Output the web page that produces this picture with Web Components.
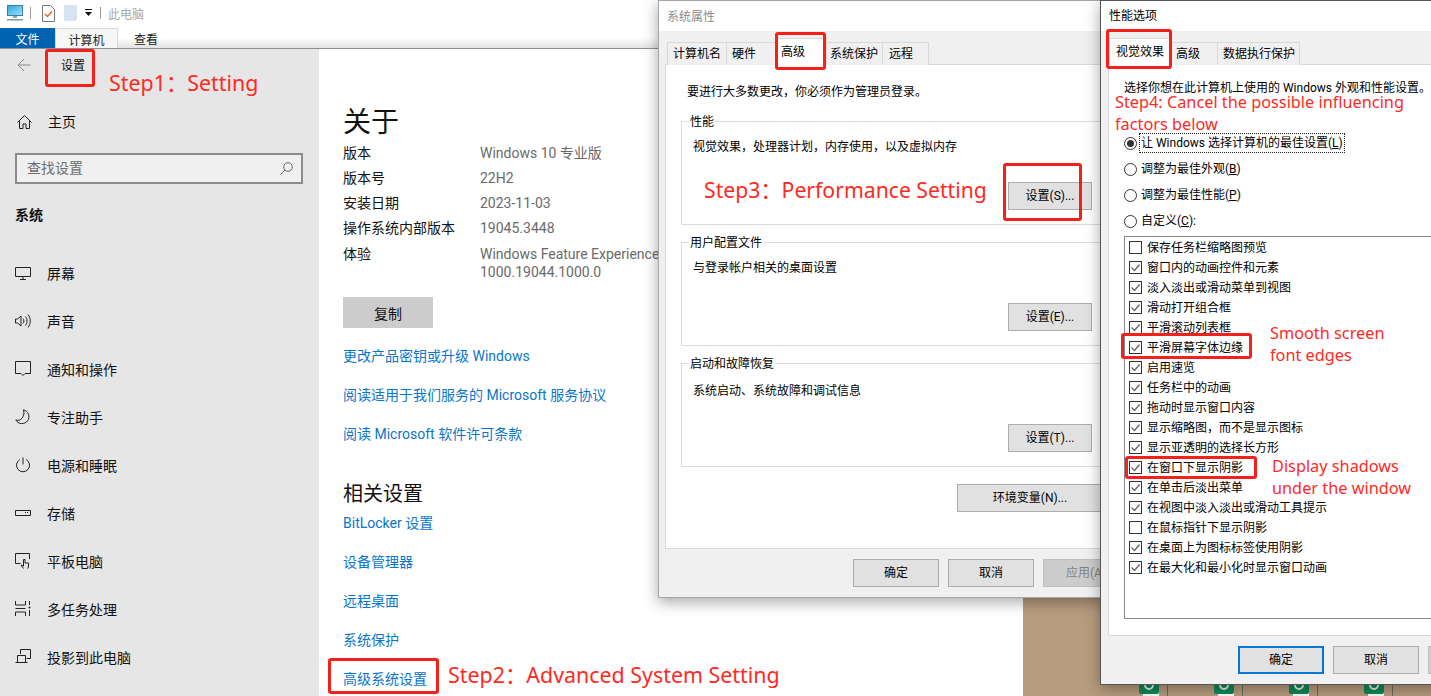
<!DOCTYPE html>
<html lang="zh">
<head>
<meta charset="utf-8">
<title>系统属性</title>
<style>
html, body { margin: 0; height: 100%; }
body {
    position: relative;
    width: 1431px;
    height: 696px;
    overflow: hidden;
    background: #b89c7f;
    font-family: Roboto, "Noto Sans CJK SC", sans-serif;
}
</style>
</head>
<body>

<desk-tiles></desk-tiles>

<settings-window></settings-window>

<sys-dialog></sys-dialog>
<perf-dialog></perf-dialog>

<red-mark style="left:45px;top:49px;width:50px;height:38px"></red-mark>
<red-mark style="left:328px;top:658px;width:111px;height:36px"></red-mark>
<red-mark style="left:775px;top:32px;width:51px;height:38px"></red-mark>
<red-mark style="left:1003px;top:163px;width:79px;height:58px"></red-mark>
<red-mark style="left:1106px;top:29px;width:66px;height:40px"></red-mark>
<red-mark style="left:1121px;top:333px;width:131px;height:26px"></red-mark>
<red-mark style="left:1125px;top:456px;width:132px;height:23px"></red-mark>

<red-note style="left:109px;top:68px;font-size:21.400px">Step1：Setting</red-note>
<red-note style="left:448px;top:660px;font-size:21.400px">Step2：Advanced System Setting</red-note>
<red-note style="left:704px;top:175px;font-size:21.200px">Step3：Performance Setting</red-note>
<red-note style="left:1115px;top:91px;font-size:16.300px;line-height:22px">Step4: Cancel the possible influencing<br>factors below</red-note>
<red-note style="left:1270px;top:322px;font-size:16.300px;line-height:22px">Smooth screen<br>font edges</red-note>
<red-note style="left:1272px;top:455px;font-size:16.300px;line-height:22px">Display shadows<br>under the window</red-note>

<script>
const SANS = 'Roboto, "Noto Sans CJK SC", sans-serif';

class RedMark extends HTMLElement
{
    constructor()
    {
        super();
        this.myRoot = this.attachShadow({ mode : "open" });
        this.myRoot.innerHTML = `
        <style>
        :host{
            position: absolute;
            display: block;
            box-sizing: border-box;
            border: 3px solid #f5201a;
            border-radius: 3px;
            z-index: 20;
        }
        </style>`;
    }
}

class RedNote extends HTMLElement
{
    constructor()
    {
        super();
        this.myRoot = this.attachShadow({ mode : "open" });
        this.myRoot.innerHTML = `
        <style>
        :host{
            position: absolute;
            display: block;
            z-index: 21;
            color: #ff2a1f;
            white-space: nowrap;
            line-height: 30px;
            font-family: "Noto Sans", "Noto Sans CJK SC", sans-serif;
        }
        </style>
        <slot></slot>`;
    }
}

class DeskTiles extends HTMLElement
{
    constructor()
    {
        super();
        this.myRoot = this.attachShadow({ mode : "open" });
        const tile = `
        <svg width="75" height="13" viewBox="0 0 75 13">
            <rect x="4" y="9" width="16" height="4" fill="#fff"/>
            <path d="M0 0h20v9a2 2 0 0 1-2 2H2a2 2 0 0 1-2-2z" fill="#0f8a55"/>
            <path d="M6 2a4 4 0 0 0 8 0" fill="none" stroke="#e8f4ee" stroke-width="2"/>
            <rect x="28" y="0" width="1" height="13" fill="#6f6a64"/>
            <rect x="-3" y="9" width="1" height="4" fill="#6f6a64"/>
        </svg>`;
        this.myRoot.innerHTML = `
        <style>
        :host{
            position: absolute;
            left: 1139px;
            top: 683px;
            display: flex;
        }
        svg{ display: block; flex: none; }
        </style>
        ${tile}${tile}${tile}${tile}`;
    }
}

class NavItem extends HTMLElement
{
    constructor()
    {
        super();
        this.myRoot = this.attachShadow({ mode : "open" });
        this.myRoot.innerHTML = `
        <style>
        :host{
            display: flex;
            align-items: center;
            height: 48px;
            padding-left: 15px;
            font-size: 14px;
            color: #111;
        }
        .icon{
            display: flex;
            width: 32px;
            flex: none;
        }
        </style>
        <span class="icon"><slot name="icon"></slot></span>
        <slot></slot>`;
    }
}

class FileRibbon extends HTMLElement
{
    constructor()
    {
        super();
        this.myRoot = this.attachShadow({ mode : "open" });
        this.myRoot.innerHTML = `
        <style>
        :host{
            display: block;
            height: 48px;
            border-bottom: 1px solid #8f8f8f;
            background: linear-gradient(#fff 0, #fff 38px, #e2e2e2 48px);
            font-size: 12px;
        }
        .quick{
            display: flex;
            align-items: center;
            height: 26px;
            margin-bottom: 2px;
            padding-left: 7px;
        }
        .quick svg{ display: block; flex: none; }
        .sep{
            width: 1px;
            height: 12px;
            background: #9a9a9a;
            flex: none;
        }
        .path{ color: #a8a8a8; margin-left: 7px; }
        .tabs{
            display: flex;
            height: 20px;
        }
        .file{
            width: 55px;
            background: #0063b1;
            color: #fff;
            text-align: center;
            line-height: 25px;
        }
        .cur{
            box-sizing: border-box;
            width: 63px;
            border: 1px solid #d9d9d9;
            border-bottom: 0;
            background: #f5f6f7;
            text-align: center;
            line-height: 25px;
            overflow: hidden;
            color: #222;
        }
        .view{
            margin-left: 16px;
            line-height: 25px;
            color: #222;
        }
        </style>
        <div class="quick">
            <svg width="16" height="16" viewBox="0 0 16 16">
                <defs><linearGradient id="scr" x1="0" y1="0" x2="1" y2="1"><stop offset="0" stop-color="#2aa6e0"/><stop offset="1" stop-color="#9fe4f7"/></linearGradient></defs>
                <rect x=".5" y=".5" width="15" height="10" fill="url(#scr)" stroke="#3c7ea8"/>
                <path d="M6 11h4v2H6z" fill="#8fa6b5"/>
                <path d="M0 14h16v1.5H0z" fill="#7f98a8"/>
            </svg>
            <span class="sep" style="margin-left:7px"></span>
            <svg style="margin-left:11px" width="13" height="17" viewBox="0 0 13 17">
                <path d="M.5.5h8l4 4v12H.5z" fill="#fff" stroke="#777"/>
                <path d="M3 9l2.5 2.5L10 6.5" fill="none" stroke="#e8662a" stroke-width="1.5"/>
            </svg>
            <svg style="margin-left:9px" width="13" height="16" viewBox="0 0 13 16">
                <path d="M0 0h13v12h-2v4H0z" fill="#d8e4f4"/>
                <path d="M11 12h2l-2 4z" fill="#b9c9dc"/>
            </svg>
            <svg style="margin-left:8px" width="7" height="8" viewBox="0 0 7 8">
                <path d="M0 .5h7" stroke="#111"/>
                <path d="M0 3h7L3.500 7z" fill="#111"/>
            </svg>
            <span class="sep" style="margin-left:8px"></span>
            <span class="path">此电脑</span>
        </div>
        <div class="tabs">
            <span class="file">文件</span>
            <span class="cur">计算机</span>
            <span class="view">查看</span>
        </div>`;
    }
}

class SettingsSide extends HTMLElement
{
    constructor()
    {
        super();
        this.myRoot = this.attachShadow({ mode : "open" });
        this.myRoot.innerHTML = `
        <style>
        :host{
            display: block;
            box-sizing: border-box;
            width: 319px;
            flex: none;
            background: #e6e6e6;
        }
        .head{
            display: flex;
            align-items: center;
            height: 31px;
            padding-left: 17px;
            font-size: 12px;
            color: #111;
        }
        .head span{ margin-left: 30px; }
        .home{
            display: flex;
            align-items: center;
            height: 48px;
            margin-top: 18px;
            padding-left: 17px;
            font-size: 14px;
            color: #111;
        }
        .home span{ margin-left: 16px; padding-bottom: 2px; }
        .search{
            box-sizing: border-box;
            display: flex;
            align-items: center;
            justify-content: space-between;
            width: 288px;
            height: 31px;
            margin: 7px 0 0 15px;
            padding: 0 8px 0 10px;
            border: 2px solid #8c8c8c;
            background: #f0f0f0;
            font-size: 14px;
            color: #6d6d6d;
        }
        .search span{ padding-bottom: 3px; }
        .group{
            height: 65px;
            padding: 21px 0 0 15px;
            box-sizing: border-box;
            line-height: 20px;
            font-size: 14px;
            font-weight: 700;
            color: #111;
        }
        svg{ display: block; fill: none; stroke: #222; }
        </style>
        <div class="head">
            <svg width="14" height="14" viewBox="0 0 14 14" style="stroke:#8a8a8a"><path d="M13.500 7H1M7 1 1 7l6 6"/></svg>
            <span>设置</span>
        </div>
        <div class="home">
            <svg width="15" height="14" viewBox="0 0 15 14"><path d="M.5 7.500 7.500.5l7 7M2.500 5.500v8H6V9h3v4.500h3.500v-8"/></svg>
            <span>主页</span>
        </div>
        <div class="search">
            <span>查找设置</span>
            <svg width="13" height="13" viewBox="0 0 13 13" style="stroke:#666"><circle cx="8" cy="5" r="4.300"/><path d="M5 8 .5 12.500"/></svg>
        </div>
        <div class="group">系统</div>
        <nav-item><svg slot="icon" width="16" height="13" viewBox="0 0 16 13"><path d="M.5.500h15v9H.5zM8 9.500v3M5 12.500h6"/></svg>屏幕</nav-item>
        <nav-item><svg slot="icon" width="16" height="16" viewBox="0 0 16 16"><path d="M.5 6h2L6 3v10L2.500 10h-2zM8 5.500c1.200 1.400 1.200 3.600 0 5M10.500 3.500c2 2.500 2 6.500 0 9M13 1.500c3 3.700 3 9.300 0 13"/></svg>声音</nav-item>
        <nav-item><svg slot="icon" width="16" height="16" viewBox="0 0 16 16"><path d="M.5.500h15v12H10L8 14.500l-2-2H.5z"/></svg>通知和操作</nav-item>
        <nav-item><svg slot="icon" width="16" height="16" viewBox="0 0 16 16"><path d="M8.500.8A7 7 0 1 1 .8 11C5.500 13 10.500 7 8.500.8z"/></svg>专注助手</nav-item>
        <nav-item><svg slot="icon" width="16" height="16" viewBox="0 0 16 16"><path d="M4.800 2.600a6.500 6.500 0 1 0 6.400 0M8 .5v7"/></svg>电源和睡眠</nav-item>
        <nav-item><svg slot="icon" width="16" height="7" viewBox="0 0 16 7"><path d="M.5.500h15v5H.5z"/><path d="M10 2.500h1M12 2.500h1"/></svg>存储</nav-item>
        <nav-item><svg slot="icon" width="16" height="16" viewBox="0 0 16 16"><path d="M14.500 6V.5H.5v10h5M8.500 15.500l-2.500-3 1-.5 1.500 1.200V6.500h1.500V10h3.500v4l-1 1.500"/></svg>平板电脑</nav-item>
        <nav-item><svg slot="icon" width="16" height="16" viewBox="0 0 16 16"><path d="M.5 0v4h10V0M.5 15v-4h10v4M.5 7.500h10M14.500 0v4M14.500 9v6"/><circle cx="14.500" cy="6.500" r="1" fill="#222" stroke="none"/></svg>多任务处理</nav-item>
        <nav-item><svg slot="icon" width="16" height="16" viewBox="0 0 16 16"><path d="M5.500 5V.5h10v9h-4M2.500 6.500h8v7h-8zM.5 13.500h12"/></svg>投影到此电脑</nav-item>`;
    }
}

class InfoRow extends HTMLElement
{
    constructor()
    {
        super();
        this.myRoot = this.attachShadow({ mode : "open" });
        this.myRoot.innerHTML = `
        <style>
        :host{
            display: grid;
            grid-template-columns: 137px 1fr;
            min-height: 25px;
            font-size: 14px;
            line-height: 25px;
            color: #111;
        }
        .val{
            color: #6a6a6a;
            white-space: nowrap;
        }
        </style>
        <div>${this.getAttribute("label")}</div>
        <div class="val"><slot></slot></div>`;
    }
}

class AboutPane extends HTMLElement
{
    constructor()
    {
        super();
        this.myRoot = this.attachShadow({ mode : "open" });
        this.myRoot.innerHTML = `
        <style>
        :host{
            display: block;
            flex: 1;
            padding: 51px 0 0 24px;
            background: #fff;
            color: #111;
        }
        h1{
            margin: 0;
            height: 41px;
            font-size: 28px;
            line-height: 45px;
            font-weight: 400;
        }
        h2{
            margin: 34px 0 0;
            height: 30px;
            font-size: 20px;
            line-height: 32px;
            font-weight: 400;
        }
        button{
            display: block;
            width: 90px;
            height: 31px;
            margin-top: 16px;
            border: 0;
            background: #ccc;
            font: 14px ${SANS};
            color: #111;
        }
        .links{
            display: flex;
            flex-direction: column;
            gap: 19px;
            margin-top: 18px;
            font-size: 14px;
            line-height: 20px;
            color: #0a75cc;
        }
        .links.rel{ margin-top: 5px; }
        </style>
        <h1>关于</h1>
        <info-row label="版本">Windows 10 专业版</info-row>
        <info-row label="版本号">22H2</info-row>
        <info-row label="安装日期">2023-11-03</info-row>
        <info-row label="操作系统内部版本">19045.3448</info-row>
        <info-row label="体验" style="line-height:18px;padding-top:4px;box-sizing:border-box;height:40px">Windows Feature Experience Pack<br>1000.19044.1000.0</info-row>
        <button>复制</button>
        <div class="links">
            <span>更改产品密钥或升级 Windows</span>
            <span>阅读适用于我们服务的 Microsoft 服务协议</span>
            <span>阅读 Microsoft 软件许可条款</span>
        </div>
        <h2>相关设置</h2>
        <div class="links rel">
            <span>BitLocker 设置</span>
            <span>设备管理器</span>
            <span>远程桌面</span>
            <span>系统保护</span>
            <span>高级系统设置</span>
        </div>`;
    }
}

class SettingsWindow extends HTMLElement
{
    constructor()
    {
        super();
        this.myRoot = this.attachShadow({ mode : "open" });
        this.myRoot.innerHTML = `
        <style>
        :host{
            position: absolute;
            left: 0;
            top: 0;
            width: 1023px;
            height: 696px;
            display: flex;
            flex-direction: column;
            background: #fff;
        }
        .body{
            display: flex;
            flex: 1;
        }
        </style>
        <file-ribbon></file-ribbon>
        <div class="body">
            <settings-side></settings-side>
            <about-pane></about-pane>
        </div>`;
    }
}

class WinTab extends HTMLElement
{
    constructor()
    {
        super();
        this.myRoot = this.attachShadow({ mode : "open" });
        this.myRoot.innerHTML = `
        <style>
        :host{
            display: block;
            box-sizing: border-box;
            flex: none;
            height: 23px;
            padding-left: 5px;
            margin-right: -1px;
            border: 1px solid #d9d9d9;
            border-bottom: 0;
            background: #f0f0f0;
            font-size: 12px;
            line-height: 22px;
            color: #000;
        }
        :host([active]){
            position: relative;
            z-index: 2;
            height: 27px;
            margin-top: -4px;
            background: #fff;
            line-height: 27px;
        }
        </style>
        <slot></slot>`;
    }
}

class WinButton extends HTMLElement
{
    constructor()
    {
        super();
        this.myRoot = this.attachShadow({ mode : "open" });
        this.myRoot.innerHTML = `
        <style>
        :host{
            display: block;
            box-sizing: border-box;
            flex: none;
            width: 86px;
            height: 28px;
            border: 1px solid #adadad;
            background: #e1e1e1;
            text-align: center;
            font-size: 12px;
            line-height: 26px;
            color: #000;
        }
        :host([primary]){
            border: 2px solid #0078d7;
            line-height: 24px;
        }
        :host([disabled]){
            border-color: #bfbfbf;
            background: #cccccc;
            color: #838383;
        }
        </style>
        <slot></slot>`;
    }
}

class GroupBox extends HTMLElement
{
    constructor()
    {
        super();
        this.myRoot = this.attachShadow({ mode : "open" });
        this.myRoot.innerHTML = `
        <style>
        :host{
            display: flex;
            flex-direction: column;
            box-sizing: border-box;
            height: 104px;
            padding-bottom: 14px;
            border: 1px solid #dcdcdc;
            font-size: 12px;
            color: #000;
        }
        .legend{
            width: fit-content;
            height: 20px;
            margin: -10px 0 0 7px;
            padding: 0 1px;
            background: #fff;
            line-height: 20px;
        }
        .desc{
            margin: var(--desc-top, 5px) 0 0 11px;
            line-height: 20px;
        }
        ::slotted(win-button){
            width: 84px;
            margin: auto 20px 0 auto;
        }
        </style>
        <div class="legend">${this.getAttribute("legend")}</div>
        <div class="desc">${this.getAttribute("desc")}</div>
        <slot></slot>`;
    }
}

class DialogFrame extends HTMLElement
{
    constructor()
    {
        super();
        this.myRoot = this.attachShadow({ mode : "open" });
        this.myRoot.innerHTML = `
        <style>
        :host{
            display: flex;
            flex-direction: column;
            box-sizing: border-box;
            height: 100%;
            background: #f0f0f0;
            font-size: 12px;
        }
        .title{
            flex: none;
            height: 30px;
            padding-left: 8px;
            background: #fff;
            line-height: var(--title-lh);
        }
        .tabs{
            display: flex;
            flex: none;
            height: 23px;
            margin: 11px 0 -1px var(--tabs-left);
            position: relative;
            z-index: 1;
        }
        .panel{
            box-sizing: border-box;
            flex: none;
            height: var(--panel-h);
            margin: 0 10px 0 var(--panel-left);
            border: 1px solid #d9d9d9;
            background: #fff;
            color: #000;
        }
        .foot{
            display: flex;
            justify-content: flex-end;
            gap: 9px;
            padding: 10px 10px 0 0;
        }
        </style>
        <div class="title" style="color:var(--title-color)"><slot name="title"></slot></div>
        <div class="tabs"><slot name="tabs"></slot></div>
        <div class="panel"><slot></slot></div>
        <div class="foot"><slot name="foot"></slot></div>`;
    }
}

class SysDialog extends HTMLElement
{
    constructor()
    {
        super();
        this.myRoot = this.attachShadow({ mode : "open" });
        this.myRoot.innerHTML = `
        <style>
        :host{
            position: absolute;
            left: 658px;
            top: 0;
            width: 482px;
            height: 598px;
            box-sizing: border-box;
            border: 1px solid #a6a6a6;
            box-shadow: 0 4px 14px rgba(0,0,0,.35);
            z-index: 5;
            --tabs-left: 8px;
            --panel-left: 6px;
            --panel-h: 485px;
            --title-color: #8c8c8c;
            --title-lh: 32px;
        }
        .inner{
            display: flex;
            flex-direction: column;
            padding: 17px 15px 0;
            font-size: 12px;
        }
        .lead{
            line-height: 20px;
            margin: 0 0 19px 6px;
        }
        group-box{ margin-bottom: 17px; }
        .env{
            width: 146px;
            margin: 0 10px 0 auto;
        }
        </style>
        <dialog-frame>
            <span slot="title">系统属性</span>
            <win-tab slot="tabs" style="width:60px">计算机名</win-tab>
            <win-tab slot="tabs" style="width:50px">硬件</win-tab>
            <win-tab slot="tabs" style="width:52px" active>高级</win-tab>
            <win-tab slot="tabs" style="width:57px;padding-left:3px">系统保护</win-tab>
            <win-tab slot="tabs" style="width:47px;padding-left:6px">远程</win-tab>
            <div class="inner">
                <div class="lead">要进行大多数更改，你必须作为管理员登录。</div>
                <group-box legend="性能" desc="视觉效果，处理器计划，内存使用，以及虚拟内存"><win-button>设置(S)...</win-button></group-box>
                <group-box legend="用户配置文件" desc="与登录帐户相关的桌面设置"><win-button>设置(E)...</win-button></group-box>
                <group-box legend="启动和故障恢复" desc="系统启动、系统故障和调试信息" style="--desc-top:7px"><win-button>设置(T)...</win-button></group-box>
                <win-button class="env">环境变量(N)...</win-button>
            </div>
            <win-button slot="foot">确定</win-button>
            <win-button slot="foot">取消</win-button>
            <win-button slot="foot" disabled>应用(A)</win-button>
        </dialog-frame>`;
    }
}

class RadioRow extends HTMLElement
{
    constructor()
    {
        super();
        this.myRoot = this.attachShadow({ mode : "open" });
        this.myRoot.innerHTML = `
        <style>
        :host{
            display: flex;
            align-items: center;
            height: 26px;
            font-size: 12px;
            color: #000;
        }
        svg{ display: block; flex: none; }
        .text{
            margin-left: 2px;
            padding: 1px 1px 0;
            line-height: 17px;
            border: 1px dotted transparent;
            white-space: nowrap;
        }
        :host([checked]) .text{ border-color: #222; }
        :host(:not([checked])) .dot{ display: none; }
        </style>
        <svg width="13" height="13" viewBox="0 0 13 13">
            <circle cx="6.500" cy="6.500" r="6" fill="#fff" stroke="#333"/>
            <circle class="dot" cx="6.500" cy="6.500" r="3.500" fill="#333"/>
        </svg>
        <span class="text"><slot></slot></span>`;
    }
}

class CheckRow extends HTMLElement
{
    constructor()
    {
        super();
        this.myRoot = this.attachShadow({ mode : "open" });
        this.myRoot.innerHTML = `
        <style>
        :host{
            display: flex;
            align-items: center;
            gap: 5px;
            height: 20px;
            padding-left: 4px;
            font-size: 12px;
            color: #000;
            white-space: nowrap;
        }
        svg{ display: block; flex: none; }
        .label{ padding-bottom: 2px; }
        :host(:not([checked])) .tick{ display: none; }
        </style>
        <svg width="13" height="13" viewBox="0 0 13 13">
            <rect x=".5" y=".5" width="12" height="12" fill="#fff" stroke="#333"/>
            <path class="tick" d="M2.500 6.500l3 3 5-6" fill="none" stroke="#666" stroke-width="1.300"/>
        </svg>
        <span class="label"><slot></slot></span>`;
    }
}

class PerfDialog extends HTMLElement
{
    constructor()
    {
        super();
        this.myRoot = this.attachShadow({ mode : "open" });
        const items = [
            ["保存任务栏缩略图预览", 0], ["窗口内的动画控件和元素", 1], ["淡入淡出或滑动菜单到视图", 1],
            ["滑动打开组合框", 1], ["平滑滚动列表框", 1], ["平滑屏幕字体边缘", 1], ["启用速览", 1],
            ["任务栏中的动画", 1], ["拖动时显示窗口内容", 1], ["显示缩略图，而不是显示图标", 1],
            ["显示亚透明的选择长方形", 1], ["在窗口下显示阴影", 1], ["在单击后淡出菜单", 1],
            ["在视图中淡入淡出或滑动工具提示", 1], ["在鼠标指针下显示阴影", 0],
            ["在桌面上为图标标签使用阴影", 1], ["在最大化和最小化时显示窗口动画", 1]
        ];
        this.myRoot.innerHTML = `
        <style>
        :host{
            position: absolute;
            left: 1100px;
            top: 0;
            width: 425px;
            height: 685px;
            box-sizing: border-box;
            border: 1px solid #555;
            box-shadow: 0 4px 14px rgba(0,0,0,.35);
            z-index: 6;
            --tabs-left: 8px;
            --panel-left: 7px;
            --panel-h: 572px;
            --title-color: #000;
            --title-lh: 30px;
        }
        .inner{
            padding: 13px 0 0 15px;
            font-size: 12px;
        }
        .lead{
            height: 20px;
            margin-bottom: 32px;
            line-height: 20px;
            white-space: nowrap;
        }
        .list{
            box-sizing: border-box;
            height: 383px;
            margin: 2px 11px 0 0;
            border: 1px solid #828790;
            background: #fff;
        }
        </style>
        <dialog-frame>
            <span slot="title">性能选项</span>
            <win-tab slot="tabs" style="width:62px;padding-left:6px" active>视觉效果</win-tab>
            <win-tab slot="tabs" style="width:48px">高级</win-tab>
            <win-tab slot="tabs" style="width:83px">数据执行保护</win-tab>
            <div class="inner">
                <div class="lead">选择你想在此计算机上使用的 Windows 外观和性能设置。</div>
                <radio-row checked>让 Windows 选择计算机的最佳设置(<u>L</u>)</radio-row>
                <radio-row>调整为最佳外观(<u>B</u>)</radio-row>
                <radio-row>调整为最佳性能(<u>P</u>)</radio-row>
                <radio-row>自定义(<u>C</u>):</radio-row>
                <div class="list">
                    ${items.map(i => `<check-row ${i[1] ? "checked" : ""}>${i[0]}</check-row>`).join("")}
                </div>
            </div>
            <win-button slot="foot" primary>确定</win-button>
            <win-button slot="foot">取消</win-button>
            <win-button slot="foot" disabled>应用(A)</win-button>
        </dialog-frame>`;
    }
}

window.customElements.define('red-mark', RedMark);
window.customElements.define('red-note', RedNote);
window.customElements.define('desk-tiles', DeskTiles);
window.customElements.define('nav-item', NavItem);
window.customElements.define('file-ribbon', FileRibbon);
window.customElements.define('settings-side', SettingsSide);
window.customElements.define('info-row', InfoRow);
window.customElements.define('about-pane', AboutPane);
window.customElements.define('settings-window', SettingsWindow);
window.customElements.define('win-tab', WinTab);
window.customElements.define('win-button', WinButton);
window.customElements.define('group-box', GroupBox);
window.customElements.define('dialog-frame', DialogFrame);
window.customElements.define('sys-dialog', SysDialog);
window.customElements.define('radio-row', RadioRow);
window.customElements.define('check-row', CheckRow);
window.customElements.define('perf-dialog', PerfDialog);
</script>
</body>
</html>
